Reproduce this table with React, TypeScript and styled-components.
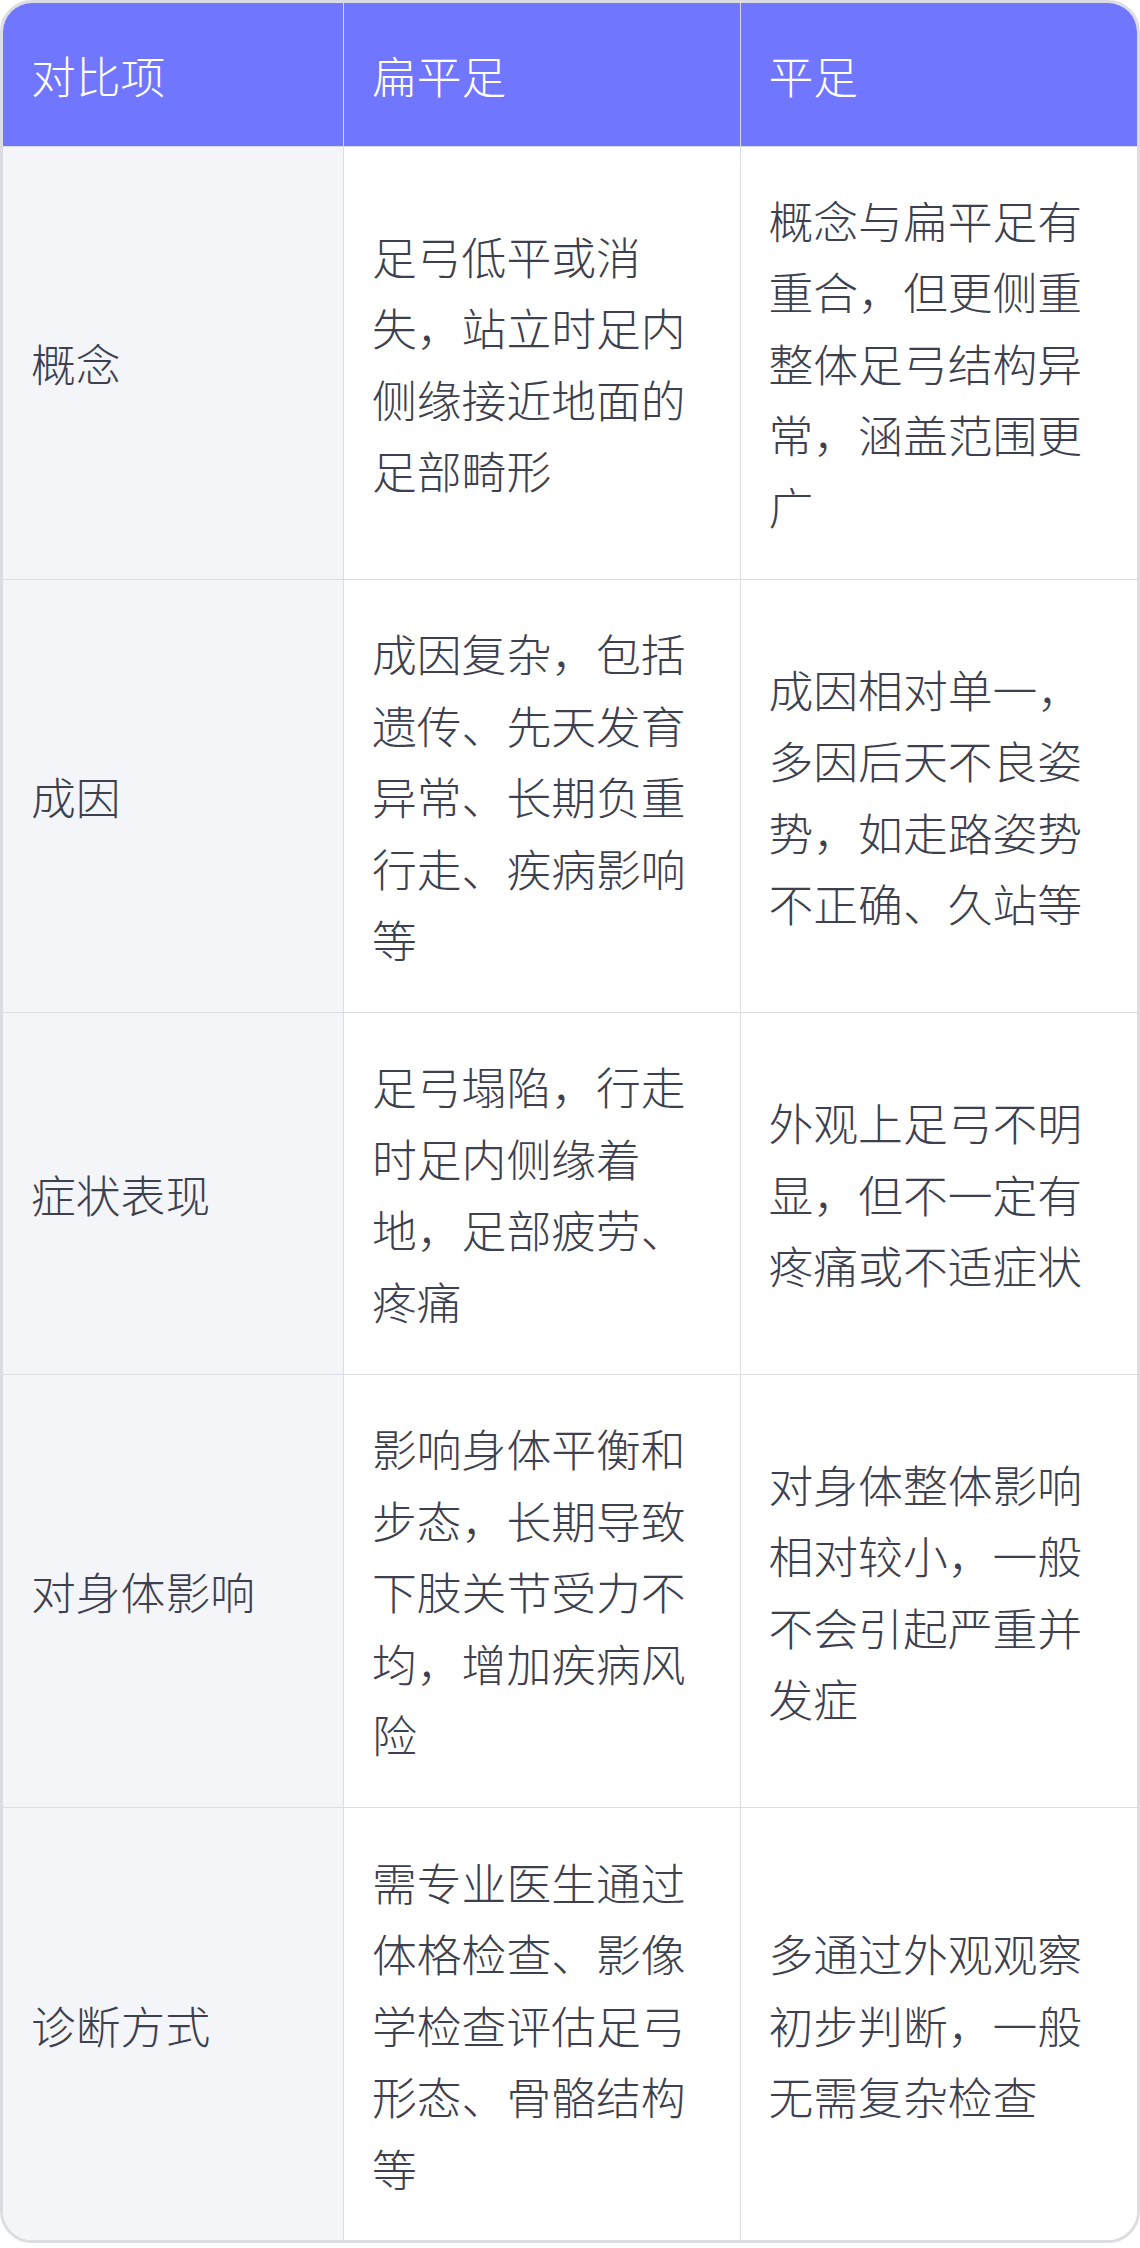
import styled, { createGlobalStyle } from "styled-components";

const GlobalStyle = createGlobalStyle`
    html, body {
        margin: 0;
        padding: 0;
        background: #ffffff;
    }
    body {
        font-family: "Noto Sans CJK SC", "Noto Sans", sans-serif;
    }
`;

const Frame = styled.div`
    width: 1140px;
    box-sizing: border-box;
    border: 3px solid #dcdde2;
    border-radius: 32px;
    overflow: hidden;
    background: #ffffff;
`;

const Table = styled.table`
    width: 100%;
    border-collapse: separate;
    border-spacing: 0;
    table-layout: fixed;
    font-size: 44.8px;
    line-height: 71.5px;
    font-weight: 300;
`;

const HeadCell = styled.th`
    background: #7176ff;
    color: #ffffff;
    font-weight: 300;
    text-align: left;
    padding: 35.5px 28px;
    border-right: 1px solid #d9dae0;
    border-bottom: 1px solid #d9dae0;

    &:last-child {
        border-right: none;
    }
`;

const Cell = styled.td<{ $label?: boolean }>`
    background: ${(p) => (p.$label ? "#f4f5f9" : "#ffffff")};
    color: #3d404e;
    vertical-align: middle;
    padding: 37.4px 28px;
    border-right: 1px solid #dcdde2;
    border-bottom: 1px solid #dcdde2;

    &:last-child {
        border-right: none;
    }

    tr:last-child > & {
        border-bottom: none;
    }
`;

const rows = [
    {
        item: "概念",
        flat: "足弓低平或消失，站立时足内侧缘接近地面的足部畸形",
        plain: "概念与扁平足有重合，但更侧重整体足弓结构异常，涵盖范围更广",
    },
    {
        item: "成因",
        flat: "成因复杂，包括遗传、先天发育异常、长期负重行走、疾病影响等",
        plain: "成因相对单一，多因后天不良姿势，如走路姿势不正确、久站等",
    },
    {
        item: "症状表现",
        flat: "足弓塌陷，行走时足内侧缘着地，足部疲劳、疼痛",
        plain: "外观上足弓不明显，但不一定有疼痛或不适症状",
    },
    {
        item: "对身体影响",
        flat: "影响身体平衡和步态，长期导致下肢关节受力不均，增加疾病风险",
        plain: "对身体整体影响相对较小，一般不会引起严重并发症",
    },
    {
        item: "诊断方式",
        flat: "需专业医生通过体格检查、影像学检查评估足弓形态、骨骼结构等",
        plain: "多通过外观观察初步判断，一般无需复杂检查",
    },
];

export default function App() {
    return (
        <>
            <GlobalStyle />
            <Frame>
                <Table>
                    <colgroup>
                        <col style={{ width: 341 }} />
                        <col />
                        <col />
                    </colgroup>
                    <thead>
                        <tr>
                            <HeadCell>对比项</HeadCell>
                            <HeadCell>扁平足</HeadCell>
                            <HeadCell>平足</HeadCell>
                        </tr>
                    </thead>
                    <tbody>
                        {rows.map((r) => (
                            <tr key={r.item}>
                                <Cell $label>{r.item}</Cell>
                                <Cell>{r.flat}</Cell>
                                <Cell>{r.plain}</Cell>
                            </tr>
                        ))}
                    </tbody>
                </Table>
            </Frame>
        </>
    );
}
